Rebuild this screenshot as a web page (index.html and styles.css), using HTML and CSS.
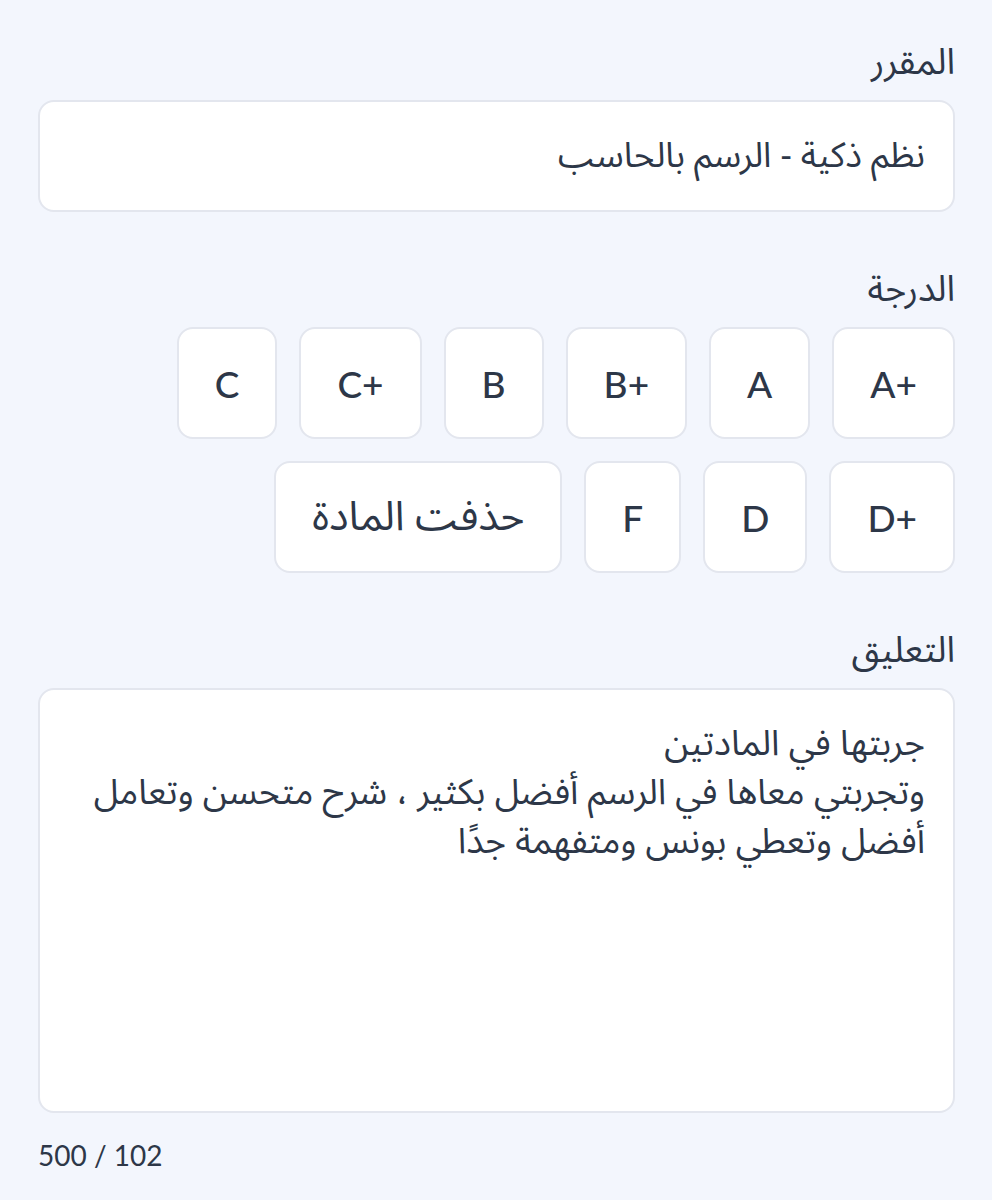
FILE: index.html
```html
<!DOCTYPE html>
<html lang="ar" dir="rtl">
<head>
<meta charset="utf-8">
<title>تقييم</title>
<link rel="stylesheet" href="styles.css">
</head>
<body>
<main class="form">
  <section class="field">
    <div class="label">المقرر</div>
    <div class="input">نظم ذكية - الرسم بالحاسب</div>
  </section>
  <section class="field">
    <div class="label">الدرجة</div>
    <div class="grades">
      <button class="grade letter">A+</button>
      <button class="grade letter">A</button>
      <button class="grade letter">B+</button>
      <button class="grade letter">B</button>
      <button class="grade letter">C+</button>
      <button class="grade letter">C</button>
      <button class="grade letter">D+</button>
      <button class="grade letter">D</button>
      <button class="grade letter">F</button>
      <button class="grade">حذفت المادة</button>
    </div>
  </section>
  <section class="field">
    <div class="label">التعليق</div>
    <div class="textarea">جربتها في المادتين
وتجربتي معاها في الرسم أفضل بكثير ، شرح متحسن وتعامل أفضل وتعطي بونس ومتفهمة جدًا</div>
    <div class="counter">102 / 500</div>
  </section>
</main>
</body>
</html>
```
FILE: styles.css
```css
* { box-sizing: border-box; }
html, body {
  margin: 0;
  background: #f3f6fd;
}
body {
  font-family: "Noto Sans Arabic", "DejaVu Sans", "Noto Sans", sans-serif;
  color: #2d3748;
}
.form {
  padding: 43px 37px 0 38px;
  display: flex;
  flex-direction: column;
  gap: 58px;
}
.label {
  font-size: 36px;
  line-height: 40px;
  height: 40px;
  margin-bottom: 17px;
}
.input {
  height: 112px;
  background: #fff;
  border: 2px solid #e3e6ee;
  border-radius: 16px;
  padding: 0 28px;
  display: flex;
  align-items: center;
  font-size: 35px;
}
.grades {
  display: flex;
  flex-wrap: wrap;
  gap: 22px;
}
.grade {
  height: 112px;
  padding: 0 36px;
  background: #fff;
  border: 2px solid #e3e6ee;
  border-radius: 16px;
  font-family: inherit;
  font-size: 41px;
  color: #2d3748;
}
.grade.letter {
  direction: ltr;
  font-family: "Lato", "Noto Sans", sans-serif;
  font-size: 37px;
  font-weight: 500;
}
.textarea {
  height: 425px;
  background: #fff;
  border: 2px solid #e3e6ee;
  border-radius: 16px;
  padding: 29px 28px;
  font-size: 35.5px;
  line-height: 49px;
  white-space: pre-line;
}
.counter {
  margin-top: 25px;
  text-align: left;
  font-family: "Lato", "Noto Sans", sans-serif;
  font-size: 28px;
  line-height: 34px;
}
```
